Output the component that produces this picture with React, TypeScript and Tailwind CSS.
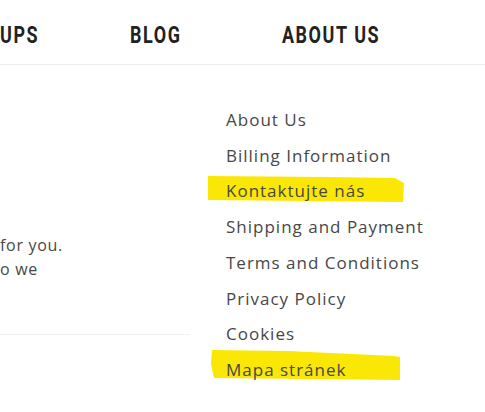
import React from "react";

const items = [
  "About Us",
  "Billing Information",
  "Kontaktujte nás",
  "Shipping and Payment",
  "Terms and Conditions",
  "Privacy Policy",
  "Cookies",
  "Mapa stránek",
];

function Highlight({ points }: { points: string }) {
  return (
    <svg
      className="absolute left-[-18px] top-[-8px] w-[200px] h-[42px] pointer-events-none"
      viewBox="0 0 200 42"
    >
      <polygon points={points} fill="#fbe705" />
    </svg>
  );
}

function NavItem({ children, className }: { children: React.ReactNode; className: string }) {
  return (
    <span className={className}>
      <span className="inline-block origin-left scale-x-[0.78]">{children}</span>
    </span>
  );
}

export default function App() {
  return (
    <div className="w-[485px] h-[412px] bg-white overflow-hidden relative">
      <header className="h-[65px] border-b border-[#ececec] flex items-center pt-[8px]">
        <nav
          className="flex items-center text-[#222] font-bold uppercase text-[23px] tracking-[2px] whitespace-nowrap"
          style={{ fontFamily: 'Roboto, "Liberation Sans", sans-serif' }}
        >
          <NavItem className="w-[130px]">UPS</NavItem>
          <NavItem className="w-[152px]">BLOG</NavItem>
          <NavItem className="">ABOUT US</NavItem>
        </nav>
      </header>
      <div
        className="flex"
        style={{ fontFamily: '"Open Sans", Lato, sans-serif' }}
      >
        <div className="w-[190px] pt-[168px] flex flex-col">
          <div className="text-[16px] leading-[24px] text-[#474747] tracking-[0.7px]">
            <p>for you.</p>
            <p>o we</p>
          </div>
          <div className="mt-[53px] h-px bg-[#f0f0f0] w-[190px]" />
        </div>
        <ul className="ml-[36px] pt-[37px] flex flex-col text-[17px] leading-[35.7px] text-[#474747] tracking-[1px]">
          {items.map((t, i) => (
            <li key={t} className="relative whitespace-nowrap">
              {i === 2 && (
                <Highlight points="0,11 120,12 187,13 196,18 195,37 100,36 0,35" />
              )}
              {i === 7 && (
                <Highlight points="4,6 80,7 186,12 192,13 192,36 100,35 6,34 3,20" />
              )}
              <span className="relative">{t}</span>
            </li>
          ))}
        </ul>
      </div>
    </div>
  );
}
